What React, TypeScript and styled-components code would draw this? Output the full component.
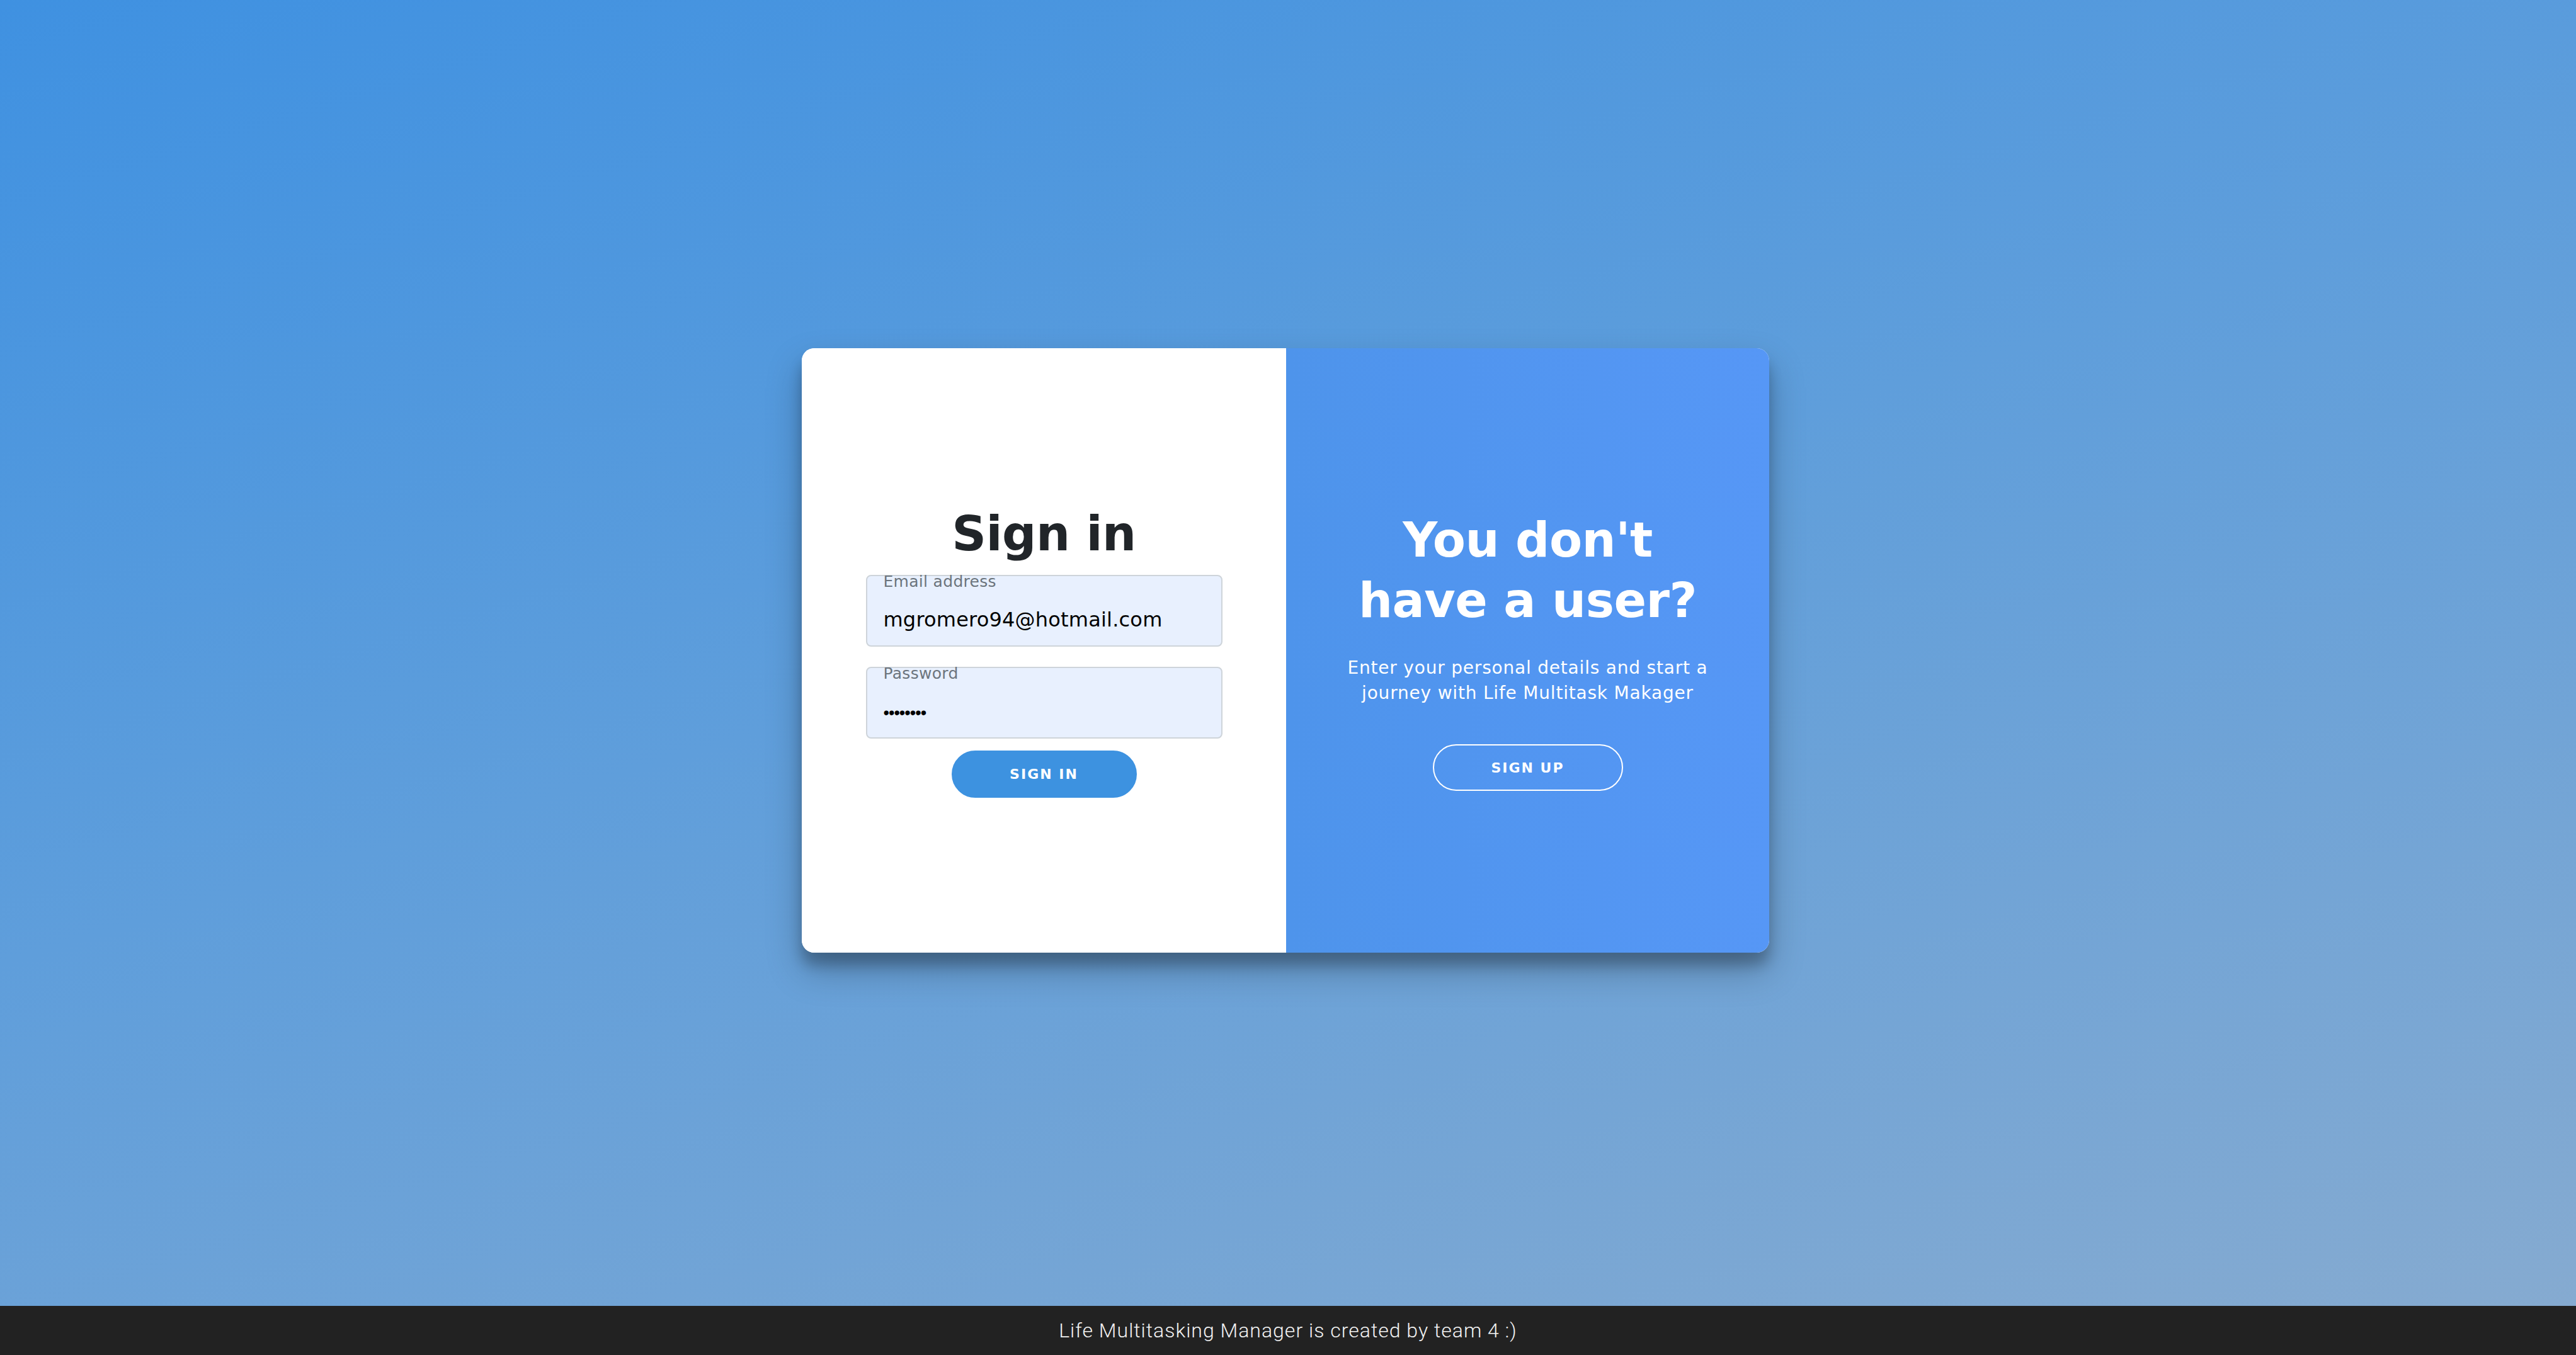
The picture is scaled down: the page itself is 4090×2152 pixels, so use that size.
import React from "react";
import styled, { createGlobalStyle } from "styled-components";

const GlobalStyle = createGlobalStyle`
  html, body {
    margin: 0;
    padding: 0;
  }
  body {
    font-family: "DejaVu Sans", "Liberation Sans", sans-serif;
  }
  * { box-sizing: border-box; }
`;

const Page = styled.div`
  min-height: 100vh;
  display: flex;
  flex-direction: column;
  background: linear-gradient(163deg, #3f91e1 0%, #5f9edb 45%, #87abd0 100%);
`;

const Main = styled.main`
  flex: 1;
  display: flex;
  align-items: center;
  justify-content: center;
  padding: 0 8px 8px 0;
`;

const Card = styled.div`
  width: 1536px;
  height: 960px;
  display: grid;
  grid-template-columns: 769px 767px;
  border-radius: 20px;
  overflow: hidden;
  background: #ffffff;
  box-shadow: 0 28px 56px rgba(0, 0, 0, 0.25), 0 20px 20px rgba(0, 0, 0, 0.22);
`;

const FormPanel = styled.form`
  display: flex;
  flex-direction: column;
  align-items: center;
  justify-content: center;
  padding-top: 4px;
  background: #ffffff;
`;

const OverlayPanel = styled.section`
  display: flex;
  flex-direction: column;
  align-items: center;
  justify-content: center;
  padding: 0 80px;
  text-align: center;
  color: #ffffff;
  background: linear-gradient(to right, #4e94eb, #5697f6);
`;

const Title = styled.h1<{ $light?: boolean }>`
  margin: 0 0 ${(p) => (p.$light ? "39px" : "21px")};
  font-family: "DejaVu Sans", sans-serif;
  font-weight: 700;
  font-size: 76px;
  line-height: ${(p) => (p.$light ? "96px" : "88px")};
  letter-spacing: -0.5px;
  color: ${(p) => (p.$light ? "#ffffff" : "#212529")};
`;

const Field = styled.label<{ $last?: boolean }>`
  width: 566px;
  height: 114px;
  margin-bottom: ${(p) => (p.$last ? "19px" : "32px")};
  display: flex;
  flex-direction: column;
  padding: 0 26px;
  background: #e8f0fe;
  border: 2px solid #ced4da;
  border-radius: 8px;
  cursor: text;
`;

const FieldLabel = styled.span`
  display: block;
  font-family: "DejaVu Sans", sans-serif;
  font-size: 25px;
  line-height: 18px;
  letter-spacing: 0.3px;
  color: #6c757d;
`;

const Input = styled.input<{ $masked?: boolean }>`
  margin-top: ${(p) => (p.$masked ? "34px" : "31px")};
  height: 40px;
  padding: 0;
  border: none;
  outline: none;
  background: transparent;
  font-family: ${(p) => (p.$masked ? '"Liberation Sans", sans-serif' : '"DejaVu Sans", sans-serif')};
  font-size: ${(p) => (p.$masked ? "27px" : "32px")};
  letter-spacing: ${(p) => (p.$masked ? "-1px" : "0.2px")};
  color: #000000;
`;

const PillButton = styled.button<{ $ghost?: boolean }>`
  width: ${(p) => (p.$ghost ? "302px" : "294px")};
  height: ${(p) => (p.$ghost ? "74px" : "75px")};
  border-radius: 40px;
  border: 2px solid ${(p) => (p.$ghost ? "#ffffff" : "#3d92e0")};
  background: ${(p) => (p.$ghost ? "transparent" : "#3d92e0")};
  color: #ffffff;
  font-family: "DejaVu Sans", sans-serif;
  font-weight: 700;
  font-size: 22px;
  letter-spacing: 2px;
  text-transform: uppercase;
  cursor: pointer;
  padding: 0;
`;

const Lead = styled.p`
  margin: 0 0 61px;
  font-family: "DejaVu Sans", sans-serif;
  font-size: 28px;
  line-height: 40px;
  letter-spacing: 0.8px;
  color: #ffffff;
`;

const Footer = styled.footer`
  height: 78px;
  display: flex;
  align-items: center;
  justify-content: center;
  background: #222222;
  color: #f2f2f2;
  font-family: "Roboto", "Liberation Sans", sans-serif;
  font-size: 32px;
  font-weight: 300;
  letter-spacing: 1px;
`;

export default function App() {
  return (
    <>
      <GlobalStyle />
      <Page>
        <Main>
          <Card>
            <FormPanel onSubmit={(e) => e.preventDefault()}>
              <Title>Sign in</Title>
              <Field>
                <FieldLabel>Email address</FieldLabel>
                <Input type="email" defaultValue="mgromero94@hotmail.com" />
              </Field>
              <Field $last>
                <FieldLabel>Password</FieldLabel>
                <Input $masked type="password" defaultValue="12345678" />
              </Field>
              <PillButton type="submit">Sign in</PillButton>
            </FormPanel>
            <OverlayPanel>
              <Title $light>
                You don't
                <br />
                have a user?
              </Title>
              <Lead>
                Enter your personal details and start a journey with Life Multitask Makager
              </Lead>
              <PillButton $ghost type="button">
                Sign up
              </PillButton>
            </OverlayPanel>
          </Card>
        </Main>
        <Footer>Life Multitasking Manager is created by team 4 :)</Footer>
      </Page>
    </>
  );
}
